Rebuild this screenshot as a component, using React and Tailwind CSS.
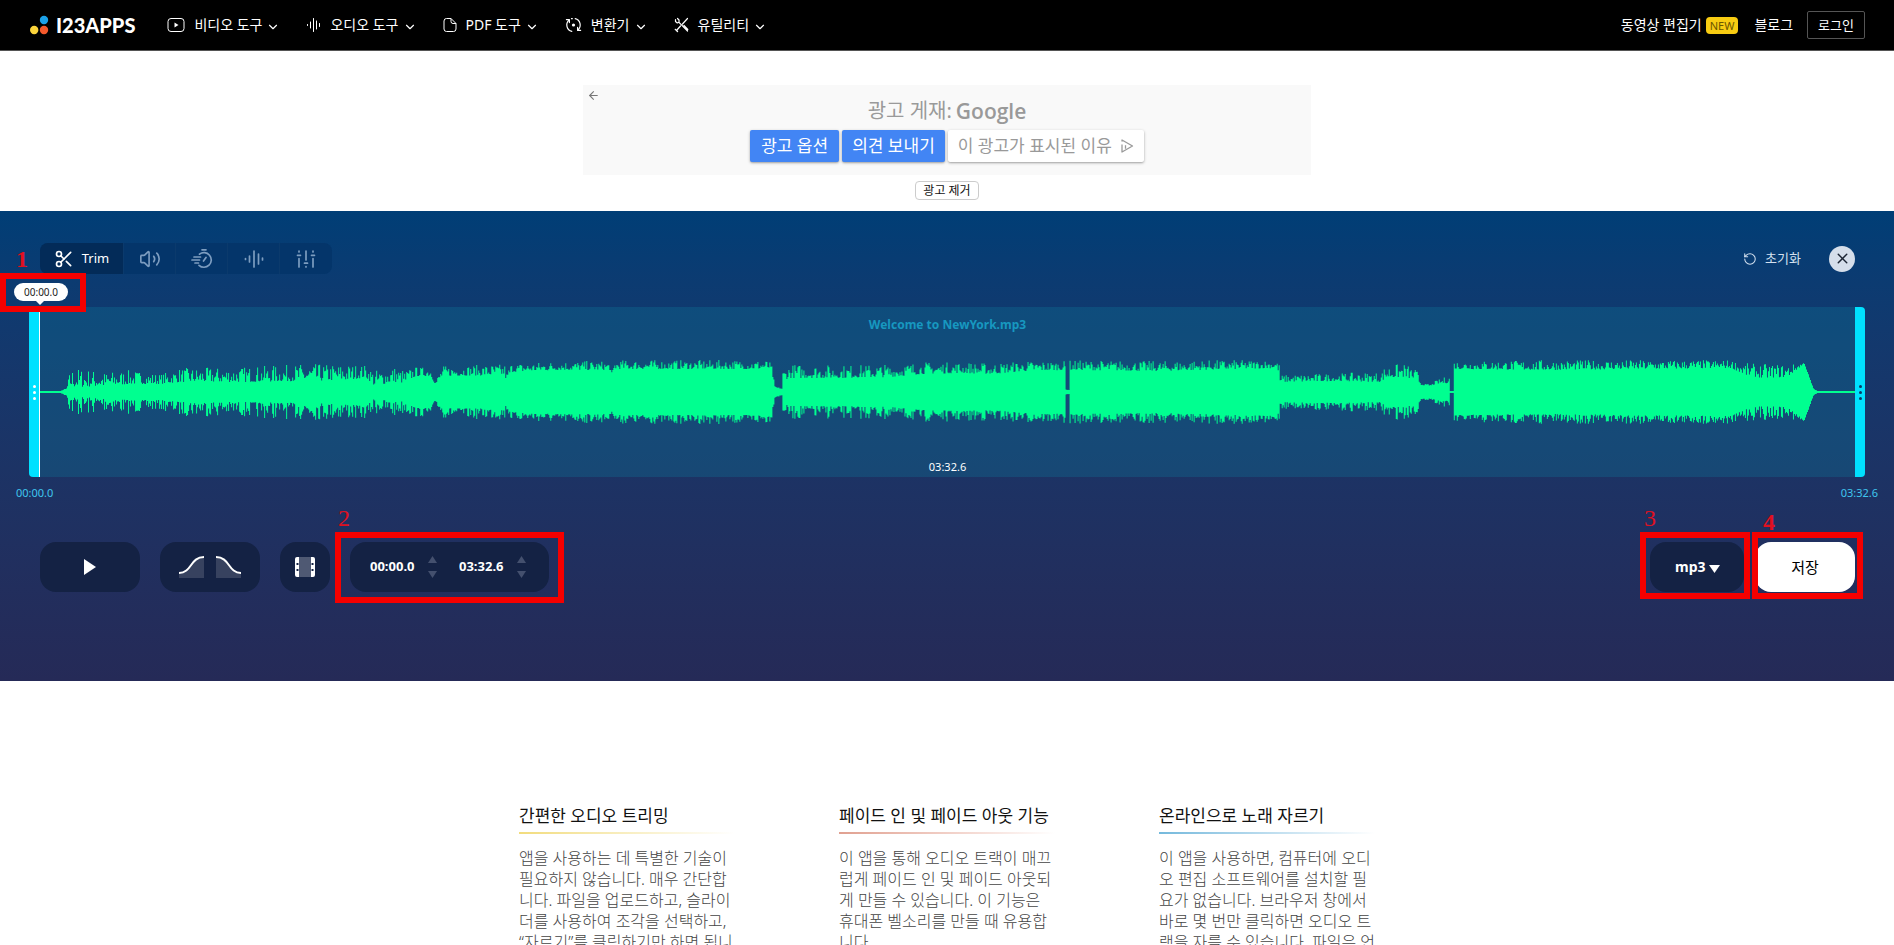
import {useState} from "react";
import {Scissors, Volume2, X, ChevronDown, ArrowLeft, RotateCcw} from "lucide-react";

// [x, body height, peak height] measured from the centre line
const ENVELOPE = [
    [0,1,1],[20,1,1],[26,3,4],[30,5,24],[44,5,24],[64,6,20],[90,8,22],[120,8,18],[140,10,24],[200,10,25],
    [260,11,28],[310,12,28],[325,15,27],[334,6,22],[352,10,26],[364,9,22],[375,16,25],[390,16,25],[395,7,12],
    [402,16,26],[464,17,28],[466,10,20],[470,20,28],[516,22,31],[569,22,31],[571,13,20],[574,23,32],[728,23,32],
    [731,20,26],[734,4,6],[741,3,4],[742,12,22],[749,14,28],[800,14,27],[850,15,28],[880,18,30],[920,19,30],
    [950,18,29],[985,21,31],[1024,22,31],[1025,2,3],[1028,2,3],[1029,22,32],[1120,21,31],[1160,22,32],[1235,24,32],
    [1238,20,28],[1239,10,17],[1300,11,19],[1340,10,20],[1344,14,26],[1362,15,29],[1376,12,22],[1380,7,8],[1390,6,8],
    [1394,8,11],[1408,9,17],[1409,1,1],[1412,1,1],[1413,23,31],[1500,22,32],[1600,23,32],[1690,24,32],[1704,17,29],
    [1720,14,28],[1746,15,28],[1756,23,28],[1763,28,30],[1768,14,15],[1772,3,4],[1776,1,1],[1814,1,1],
];

function buildWave(){
    let seed = 7;
    const rand = () => {
        seed = (seed * 16807) % 2147483647;
        return seed / 2147483647;
    };
    const top = [];
    const bottom = [];
    let i = 0;
    for(let x = 0; x < 1814; x++){
        while(x >= ENVELOPE[i + 1][0]) i++;
        const [x0,b0,p0] = ENVELOPE[i];
        const [x1,b1,p1] = ENVELOPE[i + 1];
        const t = (x - x0) / (x1 - x0);
        const body = b0 + (b1 - b0) * t;
        const peak = p0 + (p1 - p0) * t;
        const h = body + (peak - body) * Math.pow(rand(), 1.7);
        top.push(`${x},${(85 - h).toFixed(1)} ${x + 1},${(85 - h).toFixed(1)}`);
        bottom.unshift(`${x + 1},${(85 + h).toFixed(1)} ${x},${(85 + h).toFixed(1)}`);
    }
    return top.concat(bottom).join(" ");
}

const WAVE = buildWave();

/* Icons */
function VideoIcon(){
    return(
        <svg width="18" height="16" viewBox="0 0 18 16" fill="none" stroke="white">
            <rect x="1" y="1.5" width="16" height="13" rx="3"/>
            <path d="M7.5 5.5v5l4-2.5z" fill="white" stroke="none"/>
        </svg>
    );
}

function AudioIcon(){
    return(
        <svg width="15" height="16" viewBox="0 0 15 16" stroke="white" strokeLinecap="round">
            <path d="M1.5 7.5v1M4.5 5v6M7.5 1.5v13M10.5 4v8M13.5 6.5v3"/>
        </svg>
    );
}

function PdfIcon(){
    return(
        <svg width="14" height="16" viewBox="0 0 14 16" fill="none" stroke="white">
            <path d="M8 1.5H3.5a2.5 2.5 0 0 0-2.5 2.5v8a2.5 2.5 0 0 0 2.5 2.5h7a2.5 2.5 0 0 0 2.5-2.5V6.5zM8 1.5v3a2 2 0 0 0 2 2h3"/>
        </svg>
    );
}

function ConvertIcon(){
    return(
        <svg width="17" height="16" viewBox="0 0 17 16" fill="none" stroke="white" strokeWidth="1.2" strokeLinecap="round" strokeLinejoin="round">
            <path d="M6.8 14.4A6.6 6.6 0 0 1 4 3.1M1.4 2.6h3v3M10.2 1.6A6.6 6.6 0 0 1 13 12.900M15.600 13.400h-3v-3M6.500 1.700h.8"/>
            <circle cx="8.5" cy="8" r="1.6" fill="white" stroke="none"/>
        </svg>
    );
}

function UtilIcon(){
    return(
        <svg width="15" height="16" viewBox="0 0 15 16" fill="none" stroke="white" strokeWidth="1.2" strokeLinecap="round" strokeLinejoin="round">
            <path d="M13.500 1.500L8.500 7M6.500 9l-4 4.500M1.500 2.500v2l1.800 1.500 1.700-.7M3.500 1.500l1.500 1.500v2.300l8.500 8.700M10 8.500l3.800 4"/>
            <path d="M1.200 12.300l2.400 2.200"/>
        </svg>
    );
}

function SpeedIcon(){
    return(
        <svg width="22" height="22" viewBox="0 0 22 22" fill="none" stroke="currentColor" strokeWidth="1.7" strokeLinecap="round">
            <path d="M11 1.800h4M8.500 6.200A7.300 7.300 0 1 1 8 17.300M12.500 13l2.500-3.500M3 9h6.500M1 12h7.500M4 15h3.500"/>
        </svg>
    );
}

function PitchIcon(){
    return(
        <svg width="20" height="20" viewBox="0 0 20 20" stroke="currentColor" strokeWidth="1.7" strokeLinecap="round">
            <path d="M1.5 9.5v1M5.5 7v6M10 2v16M14.5 5v10M18.5 9v2"/>
        </svg>
    );
}

function EqIcon(){
    return(
        <svg width="20" height="20" viewBox="0 0 20 20" stroke="currentColor" strokeWidth="1.7" strokeLinecap="round">
            <path d="M3 2v1M3 9.5V18M10 2v9M10 17.5v.5M17 2v1M17 9.5V18M1.5 6.3h3M8.5 14.2h3M15.5 6.3h3"/>
        </svg>
    );
}

function FadeIcon(){
    return(
        <svg width="64" height="24" viewBox="0 0 64 24" fill="none" stroke="white" strokeWidth="2">
            <path d="M1 18C14 18 12 2 26 2V23H1z" fill="white" fillOpacity="0.15" stroke="none"/>
            <path d="M38 2C52 2 50 18 63 18V23H38z" fill="white" fillOpacity="0.15" stroke="none"/>
            <path d="M1 18C14 18 12 2 26 2M38 2C52 2 50 18 63 18"/>
        </svg>
    );
}

function FilmIcon(){
    return(
        <svg width="20" height="20" viewBox="0 0 20 20" fill="white">
            <path d="M4 0h12v20H4z" opacity="0.25"/>
            <path d="M2 0h2v20H2a2 2 0 0 1-2-2V2a2 2 0 0 1 2-2zM16 0h2a2 2 0 0 1 2 2v16a2 2 0 0 1-2 2h-2z"/>
            <path d="M1.5 6h2v2h-2zM1.5 12h2v2h-2zM16.5 6h2v2h-2zM16.5 12h2v2h-2z" fill="#142244"/>
        </svg>
    );
}

const menus = [
    {label: "비디오 도구", icon: <VideoIcon/>},
    {label: "오디오 도구", icon: <AudioIcon/>},
    {label: "PDF 도구", icon: <PdfIcon/>},
    {label: "변환기", icon: <ConvertIcon/>},
    {label: "유틸리티", icon: <UtilIcon/>},
];

const tools = [
    {label: "Volume", icon: <Volume2 size={22} strokeWidth={1.8}/>},
    {label: "Speed", icon: <SpeedIcon/>},
    {label: "Pitch", icon: <PitchIcon/>},
    {label: "Equalizer", icon: <EqIcon/>},
];

const features = [
    {
        title: "간편한 오디오 트리밍",
        line: "from-[#f2dc7c]",
        text: ["앱을 사용하는 데 특별한 기술이", "필요하지 않습니다. 매우 간단합", "니다. 파일을 업로드하고, 슬라이", "더를 사용하여 조각을 선택하고,", "“자르기”를 클릭하기만 하면 됩니"],
    },
    {
        title: "페이드 인 및 페이드 아웃 기능",
        line: "from-[#e0a090]",
        text: ["이 앱을 통해 오디오 트랙이 매끄", "럽게 페이드 인 및 페이드 아웃되", "게 만들 수 있습니다. 이 기능은", "휴대폰 벨소리를 만들 때 유용합", "니다."],
    },
    {
        title: "온라인으로 노래 자르기",
        line: "from-[#74b9dc]",
        text: ["이 앱을 사용하면, 컴퓨터에 오디", "오 편집 소프트웨어를 설치할 필", "요가 없습니다. 브라우저 창에서", "바로 몇 번만 클릭하면 오디오 트", "랙을 자를 수 있습니다. 파일은 언"],
    },
];

function Header(){
    return(
        <header className="flex h-[51px] items-center border-b border-[#555] bg-black pl-[30px] pr-[29px] text-sm text-white">

            {/* Logo */}
            <a href="#" aria-label="123APPS" className="mr-8 flex items-center gap-[7px]">
                <svg width="19" height="20" viewBox="0 0 19 20">
                    <circle cx="14" cy="5" r="4.2" fill="#1ba1e8"/>
                    <circle cx="4.2" cy="15" r="4.2" fill="#fbd43b"/>
                    <circle cx="14" cy="15" r="4.2" fill="#f4592b"/>
                </svg>
                <span className="font-['Lato'] text-[20px] leading-5 font-black">I23APPS</span>
            </a>

            {/* Menus */}
            <nav className="flex items-center gap-[26px]">
                {menus.map((m)=>(
                    <button key={m.label} className="flex items-center">
                        {m.icon}
                        <span className="ml-[9px] leading-5">{m.label}</span>
                        <ChevronDown size={14} strokeWidth={2} className="ml-1 mt-1"/>
                    </button>
                ))}
            </nav>

            {/* Right side */}
            <div className="ml-auto flex items-center">
                <a href="#" className="flex items-center gap-1">
                    동영상 편집기
                    <span className="rounded bg-[#f8cc12] px-1 text-[11px] leading-[17px] text-[#6b5500]">NEW</span>
                </a>
                <a href="#" className="ml-4">블로그</a>
                <button className="ml-[14px] h-7 rounded-xs border border-[#555] px-[10px] text-[13px]">로그인</button>
            </div>
        </header>
    );
}

function AdBar(){
    return(
        <div className="flex h-40 flex-col items-center pt-[34px]">
            <div className="relative flex h-[90px] w-full max-w-[728px] flex-col items-center bg-[#f9f9f9] pt-3">
                <button aria-label="뒤로" className="absolute left-1 top-1 text-[#777]"><ArrowLeft size={13}/></button>

                <div className="flex items-center gap-1 leading-[26px] text-[#9a9a9a]">
                    <span className="text-xl">광고 게재:</span>
                    <span className="font-['Open_Sans'] text-[21px] font-semibold text-[#999]">Google</span>
                </div>

                <div className="mt-[5px] flex gap-[3px] text-[17px]">
                    <button className="h-8 rounded-xs bg-[#4285f4] px-[11px] text-white shadow-sm shadow-black/30">광고 옵션</button>
                    <button className="h-8 rounded-xs bg-[#4285f4] px-[10px] text-white shadow-sm shadow-black/30">의견 보내기</button>
                    <button className="flex h-8 items-center gap-2 rounded-xs bg-white px-[10px] text-[#999] shadow-sm shadow-black/30">
                        이 광고가 표시된 이유
                        <svg width="14" height="16" viewBox="0 0 14 16" fill="none" stroke="#999" strokeWidth="1.3" strokeLinejoin="round">
                            <path d="M2 6.500V14L12.500 8L2 2v1.500M5.500 7.200v3.500"/>
                        </svg>
                    </button>
                </div>
            </div>

            <button className="mt-[6px] h-[19px] rounded border border-[#ccc] bg-white px-[7px] text-xs leading-[16px] text-[#111]">광고 제거</button>
        </div>
    );
}

function Handle({side, label}){
    return(
        <button aria-label={label} className={side === "left"
            ? "flex w-[11px] shrink-0 flex-col items-center justify-center gap-[3px] rounded-l border-r border-white bg-[#00e1ff] text-white"
            : "flex w-[10px] shrink-0 flex-col items-center justify-center gap-[3px] rounded-r bg-[#00e1ff] text-[#0b3a66]"}>
            <span className="size-[3px] rounded-full bg-current"/>
            <span className="size-[3px] rounded-full bg-current"/>
            <span className="size-[3px] rounded-full bg-current"/>
        </button>
    );
}

function TimeInput({label, value, onChange}){
    return(
        <div className="flex items-center gap-3">
            <input aria-label={label} value={value} onChange={(e)=>onChange(e.target.value)} className="w-[46px] bg-transparent text-[13px] font-bold text-white outline-none"/>
            <div className="flex flex-col gap-2 text-[#44506e]">
                <button aria-label="증가"><svg width="9" height="7" viewBox="0 0 9 7"><path d="M4.5 0L9 7H0z" fill="currentColor"/></svg></button>
                <button aria-label="감소"><svg width="9" height="7" viewBox="0 0 9 7"><path d="M4.5 7L9 0H0z" fill="currentColor"/></svg></button>
            </div>
        </div>
    );
}

function Editor(){

    const [start,setStart] = useState("00:00.0");
    const [end,setEnd] = useState("03:32.6");
    const [format,setFormat] = useState("mp3");

    return(
        <section className="bg-linear-to-b from-[#003e76] to-[#252a57] pt-8 pb-[89px]">

            {/* Tools */}
            <div className="relative flex h-[31px] items-center justify-between pr-[39px] pl-10">
                <div className="flex h-full divide-x divide-[#0b3a6c] overflow-hidden rounded-lg bg-[#04356a] text-[#7d9dc0]">
                    <button className="flex w-[84px] items-center justify-center gap-2 bg-[#032b58] text-[13px] text-white">
                        <Scissors size={20} strokeWidth={2}/>
                        Trim
                    </button>
                    {tools.map((t)=>(
                        <button key={t.label} aria-label={t.label} className="flex w-[52px] items-center justify-center">{t.icon}</button>
                    ))}
                </div>
                <div className="flex items-center gap-7">
                    <button className="flex items-center gap-2 text-[13px] text-[#d3e0ef]">
                        <RotateCcw size={14} strokeWidth={1.8}/>
                        초기화
                    </button>
                    <button aria-label="닫기" className="flex size-[26px] items-center justify-center rounded-full bg-[#d5deea] text-[#1b2433]"><X size={17}/></button>
                </div>
                <span className="absolute left-4 top-1 font-['Liberation_Serif'] text-[24px] leading-6 font-bold text-[#e01020]">1</span>
            </div>

            {/* Waveform */}
            <div className="relative mx-[29px] mt-[33px] flex h-[170px]">
                <Handle side="left" label="시작"/>
                <div className="relative flex flex-1 flex-col items-center justify-between bg-[#0c7a9c]/30 pt-2 pb-[2px]">
                    <svg className="absolute inset-0 size-full" viewBox="0 0 1814 170" preserveAspectRatio="none">
                        <polygon points={WAVE} fill="#00ff90"/>
                    </svg>
                    <span className="text-xs leading-5 font-bold text-[#1798c0]">Welcome to NewYork.mp3</span>
                    <span className="text-[11px] leading-4 text-white">03:32.6</span>
                </div>
                <Handle side="right" label="끝"/>

                {/* Start marker */}
                <div className="absolute -left-[29px] -top-[34px] h-[39px] w-[86px] border-[6px] border-[#f50000]"/>
                <div className="absolute -left-[15px] -top-6 h-[18px] w-[54px] rounded-full bg-white text-center text-[10px] leading-[18px] text-[#222]">
                    00:00.0
                    <svg className="absolute left-[22px] top-[18px]" width="8" height="4" viewBox="0 0 8 4"><path d="M0 0h8L4 4z" fill="white"/></svg>
                </div>
            </div>

            <div className="mt-2 flex justify-between px-4 text-[11px] leading-4 text-[#3fc6ee]">
                <span>00:00.0</span>
                <span>03:32.6</span>
            </div>

            {/* Controls */}
            <div className="mt-[41px] flex items-center pr-[39px] pl-10">
                <button aria-label="재생" className="flex h-[50px] w-[100px] items-center justify-center rounded-2xl bg-[#142244]">
                    <svg width="12" height="16" viewBox="0 0 12 16"><path d="M0 0l12 8-12 8z" fill="white"/></svg>
                </button>
                <button aria-label="페이드" className="ml-5 flex h-[50px] w-[100px] items-center justify-center rounded-2xl bg-[#142244]"><FadeIcon/></button>
                <button aria-label="필름" className="ml-5 flex size-[50px] items-center justify-center rounded-2xl bg-[#142244]"><FilmIcon/></button>

                <div className="relative ml-5">
                    <div className="flex h-[50px] w-[199px] items-center gap-[22px] rounded-2xl bg-[#142244] pl-5">
                        <TimeInput label="시작 시간" value={start} onChange={setStart}/>
                        <TimeInput label="종료 시간" value={end} onChange={setEnd}/>
                    </div>
                    <div className="pointer-events-none absolute -inset-x-[15px] -top-[10px] -bottom-[11px] border-[6px] border-[#f50000]"/>
                    <span className="absolute -left-3 -top-9 font-['Liberation_Serif'] text-[24px] leading-6 text-[#e01020]">2</span>
                </div>

                <div className="relative ml-auto">
                    <select aria-label="형식" value={format} onChange={(e)=>setFormat(e.target.value)} className="h-[50px] w-[94px] appearance-none rounded-2xl bg-[#142244] pl-[25px] text-sm font-bold text-white outline-none">
                        <option>mp3</option>
                    </select>
                    <svg className="pointer-events-none absolute top-[23px] left-[59px]" width="11" height="8" viewBox="0 0 11 8"><path d="M0 0h11L5.5 8z" fill="white"/></svg>
                    <div className="pointer-events-none absolute -left-[10px] -right-[6px] -top-[10px] -bottom-[7px] border-[6px] border-[#f50000]"/>
                    <span className="absolute -left-[6px] -top-9 font-['Liberation_Serif'] text-[24px] leading-6 text-[#e01020]">3</span>
                </div>

                <div className="relative ml-[11px]">
                    <button className="h-[50px] w-[100px] rounded-2xl bg-white text-[15px] text-black">저장</button>
                    <div className="pointer-events-none absolute -left-[3px] -right-2 -top-[10px] -bottom-[7px] border-[6px] border-[#f50000]"/>
                    <span className="absolute left-2 -top-8 font-['Liberation_Serif'] text-[24px] leading-6 font-bold text-[#e01020]">4</span>
                </div>
            </div>
        </section>
    );
}

export default function App(){
    return(
        <div className="flex h-screen flex-col overflow-hidden bg-white font-['Noto_Sans','Noto_Sans_CJK_KR',sans-serif] *:shrink-0">
            <Header/>
            <AdBar/>
            <Editor/>

            {/* Features */}
            <section className="mx-auto flex gap-[104px] pt-[123px]">
                {features.map((f)=>(
                    <article key={f.title} className="w-[216px] whitespace-nowrap">
                        <h2 className="text-[17px] leading-6 text-[#111]">{f.title}</h2>
                        <div className={`mt-1 h-[2px] bg-linear-to-r ${f.line} to-white`}/>
                        <p className="mt-[14px] text-base leading-[21px] font-light text-[#444]">
                            {f.text.map((t)=>(<span key={t} className="block">{t}</span>))}
                        </p>
                    </article>
                ))}
            </section>
        </div>
    );
}
